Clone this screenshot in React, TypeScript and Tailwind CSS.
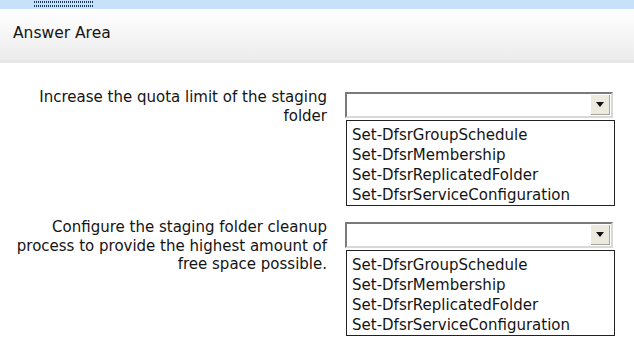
import { useState } from 'react'

const commands = [
  'Set-DfsrGroupSchedule',
  'Set-DfsrMembership',
  'Set-DfsrReplicatedFolder',
  'Set-DfsrServiceConfiguration',
]

function Dropdown() {
  const [value] = useState('')
  return (
    <div className="flex flex-col">
      <div className="mt-[4px] flex h-[26px] w-[268px] items-center justify-end border-2 border-t-[#7a7a7a] border-l-[#7a7a7a] border-r-[#d8d8d8] border-b-[#d8d8d8] bg-white pr-[1px]">
        <span className="flex-1 pl-1">{value}</span>
        <div className="flex h-[20px] w-[19px] items-center justify-center border-r border-b border-[#a8a49a] bg-[#ece9df]">
          <svg width="8" height="5" viewBox="0 0 8 5">
            <path d="M0 0h8L4 5z" fill="#111" />
          </svg>
        </div>
      </div>
      <ul className="ml-px mt-[2px] h-[86px] w-[269px] border border-[#222] bg-white pl-[5px] pt-[4px] text-[15px] leading-[20px] text-[#141414]">
        {commands.map((c) => (
          <li key={c}>{c}</li>
        ))}
      </ul>
    </div>
  )
}

function Row({ label }: { label: string[] }) {
  return (
    <div className="flex">
      <div className="w-[327px] pl-[10px] text-right text-[15px] leading-[18.5px] text-[#141414]">
        {label.map((l) => (
          <div key={l}>{l}</div>
        ))}
      </div>
      <div className="ml-[18px]">
        <Dropdown />
      </div>
    </div>
  )
}

export default function App() {
  return (
    <div className="h-[340px] w-[634px] overflow-hidden bg-white font-['DejaVu_Sans',sans-serif]">
      <div className="h-[9px] bg-[#c8e1fb] pt-[1px]">
        <div className="ml-[34px] flex h-[6px] w-[60px] flex-col justify-between">
          <div className="h-[2px] bg-[repeating-linear-gradient(90deg,#1f3a5a_0_1px,transparent_1px_2px)]" />
          <div className="h-[2px] bg-[repeating-linear-gradient(90deg,#1f3a5a_0_1px,transparent_1px_2px)]" />
        </div>
      </div>
      <div className="flex h-[51px] items-center bg-gradient-to-b from-white to-[#ececec] pb-[2px] pl-[13px] text-[15.5px] text-[#141414]">
        Answer Area
      </div>
      <div className="h-[3px] bg-[#e6e6e6]" />
      <div className="flex flex-col gap-[12px] pt-[25px]">
        <Row label={['Increase the quota limit of the staging', 'folder']} />
        <Row
          label={[
            'Configure the staging folder cleanup',
            'process to provide the highest amount of',
            'free space possible.',
          ]}
        />
      </div>
    </div>
  )
}
